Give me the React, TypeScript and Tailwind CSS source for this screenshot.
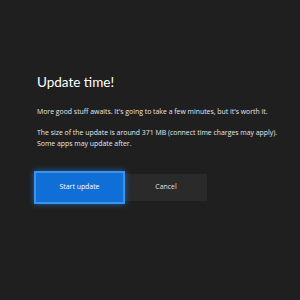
export default function App() {
  return (
    <div
      className="w-[300px] h-[300px] bg-[#1f1f1f] text-[#e6e6e6] overflow-hidden"
      style={{ fontFamily: '"Open Sans", "Noto Sans", sans-serif' }}
    >
      <div className="pl-[37px] pt-[74px]">
        <h1 className="text-[13.5px] leading-[17px] text-white font-[Lato,sans-serif]">Update time!</h1>
        <p className="mt-[15px] text-[6.9px] leading-[11px]">
          More good stuff awaits. It's going to take a few minutes, but it's worth it.
        </p>
        <p className="mt-[10px] text-[6.9px] leading-[11px]">
          The size of the update is around 371 MB (connect time charges may apply).
          <br />
          Some apps may update after.
        </p>
      </div>
      <div className="flex items-center pl-[34px] mt-[22px]">
        <button className="w-[91px] h-[33px] bg-[#0f6fd6] border-2 border-[#3e92e8] shadow-[0_0_6px_rgba(30,130,240,0.7)] text-white text-[6.9px] z-10">
          Start update
        </button>
        <button className="w-[82px] h-[27px] bg-[#2a2a2a] text-[#e0e0e0] text-[6.9px]">
          Cancel
        </button>
      </div>
    </div>
  );
}
